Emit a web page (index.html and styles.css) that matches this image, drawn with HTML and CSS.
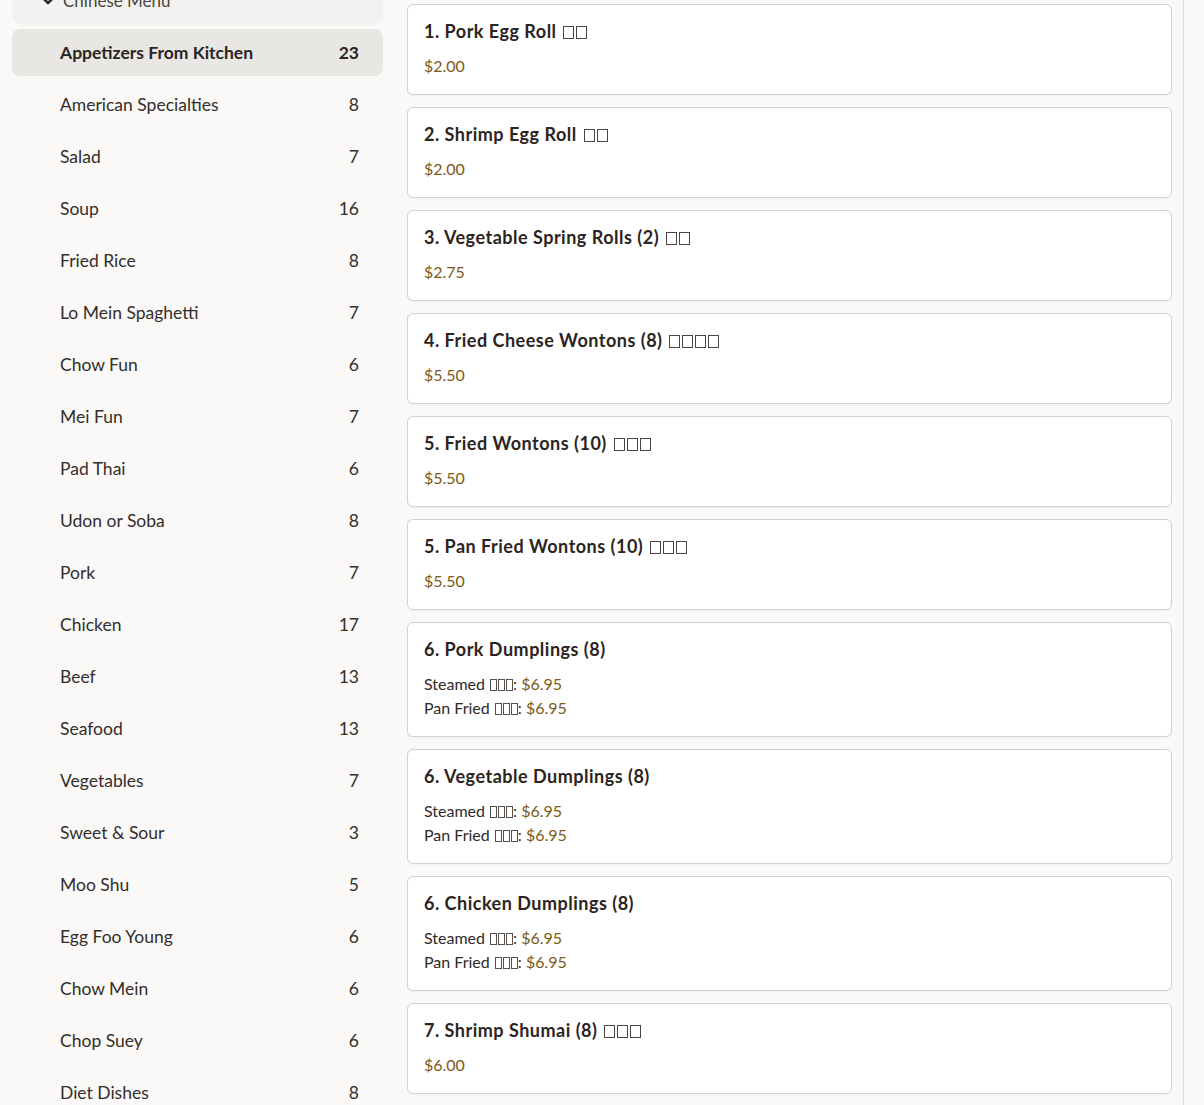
FILE: index.html
```html
<!DOCTYPE html>
<html lang="en">
<head>
<meta charset="utf-8">
<title>Menu</title>
<link rel="stylesheet" href="styles.css">
</head>
<body>
<div class="layout">
  <aside class="sidebar">
    <div class="group-head">
      <svg class="chev" width="14" height="10" viewBox="0 0 14 10"><polyline points="2,2 7,7 12,2" fill="none" stroke="#2b2b2b" stroke-width="2.6" stroke-linecap="round" stroke-linejoin="round"/></svg>
      <span>Chinese Menu</span>
    </div>
    <nav class="cats">
      <a class="cat active"><span>Appetizers From Kitchen</span><span>23</span></a>
      <a class="cat"><span>American Specialties</span><span>8</span></a>
      <a class="cat"><span>Salad</span><span>7</span></a>
      <a class="cat"><span>Soup</span><span>16</span></a>
      <a class="cat"><span>Fried Rice</span><span>8</span></a>
      <a class="cat"><span>Lo Mein Spaghetti</span><span>7</span></a>
      <a class="cat"><span>Chow Fun</span><span>6</span></a>
      <a class="cat"><span>Mei Fun</span><span>7</span></a>
      <a class="cat"><span>Pad Thai</span><span>6</span></a>
      <a class="cat"><span>Udon or Soba</span><span>8</span></a>
      <a class="cat"><span>Pork</span><span>7</span></a>
      <a class="cat"><span>Chicken</span><span>17</span></a>
      <a class="cat"><span>Beef</span><span>13</span></a>
      <a class="cat"><span>Seafood</span><span>13</span></a>
      <a class="cat"><span>Vegetables</span><span>7</span></a>
      <a class="cat"><span>Sweet &amp; Sour</span><span>3</span></a>
      <a class="cat"><span>Moo Shu</span><span>5</span></a>
      <a class="cat"><span>Egg Foo Young</span><span>6</span></a>
      <a class="cat"><span>Chow Mein</span><span>6</span></a>
      <a class="cat"><span>Chop Suey</span><span>6</span></a>
      <a class="cat"><span>Diet Dishes</span><span>8</span></a>
    </nav>
  </aside>
  <main class="content">
    <div class="card">
      <h3 class="title">1. Pork Egg Roll <span class="tf"><i></i><i></i></span></h3>
      <div class="price">$2.00</div>
    </div>
    <div class="card">
      <h3 class="title">2. Shrimp Egg Roll <span class="tf"><i></i><i></i></span></h3>
      <div class="price">$2.00</div>
    </div>
    <div class="card">
      <h3 class="title">3. Vegetable Spring Rolls (2) <span class="tf"><i></i><i></i></span></h3>
      <div class="price">$2.75</div>
    </div>
    <div class="card">
      <h3 class="title">4. Fried Cheese Wontons (8) <span class="tf"><i></i><i></i><i></i><i></i></span></h3>
      <div class="price">$5.50</div>
    </div>
    <div class="card">
      <h3 class="title">5. Fried Wontons (10) <span class="tf"><i></i><i></i><i></i></span></h3>
      <div class="price">$5.50</div>
    </div>
    <div class="card">
      <h3 class="title">5. Pan Fried Wontons (10) <span class="tf"><i></i><i></i><i></i></span></h3>
      <div class="price">$5.50</div>
    </div>
    <div class="card">
      <h3 class="title">6. Pork Dumplings (8)</h3>
      <div class="opts">
        <div class="opt">Steamed <span class="tf sm"><i></i><i></i><i></i></span>: <span class="amt">$6.95</span></div>
        <div class="opt">Pan Fried <span class="tf sm"><i></i><i></i><i></i></span>: <span class="amt">$6.95</span></div>
      </div>
    </div>
    <div class="card">
      <h3 class="title">6. Vegetable Dumplings (8)</h3>
      <div class="opts">
        <div class="opt">Steamed <span class="tf sm"><i></i><i></i><i></i></span>: <span class="amt">$6.95</span></div>
        <div class="opt">Pan Fried <span class="tf sm"><i></i><i></i><i></i></span>: <span class="amt">$6.95</span></div>
      </div>
    </div>
    <div class="card">
      <h3 class="title">6. Chicken Dumplings (8)</h3>
      <div class="opts">
        <div class="opt">Steamed <span class="tf sm"><i></i><i></i><i></i></span>: <span class="amt">$6.95</span></div>
        <div class="opt">Pan Fried <span class="tf sm"><i></i><i></i><i></i></span>: <span class="amt">$6.95</span></div>
      </div>
    </div>
    <div class="card">
      <h3 class="title">7. Shrimp Shumai (8) <span class="tf"><i></i><i></i><i></i></span></h3>
      <div class="price">$6.00</div>
    </div>
  </main>
</div>
</body>
</html>
```

FILE: styles.css
```css
* { box-sizing: border-box; }
html, body { margin: 0; padding: 0; }
body {
  background: #faf9f7;
  font-family: Lato, "Noto Sans", sans-serif;
  color: #2b2623;
  overflow: hidden;
  height: 1105px;
}
.layout {
  display: flex;
  align-items: flex-start;
  gap: 24px;
  padding-left: 12px;
}
.sidebar {
  width: 371px;
  flex: none;
  display: flex;
  flex-direction: column;
  gap: 4px;
  margin-top: -24px;
}
.group-head {
  height: 49px;
  background: #f3f2f0;
  border-radius: 10px;
  display: flex;
  align-items: center;
  padding-left: 29px;
  gap: 8px;
  font-size: 17px;
  color: #4a4542;
}
.chev { display: block; }
.cats {
  display: flex;
  flex-direction: column;
  gap: 5px;
}
.cat {
  height: 47px;
  display: flex;
  align-items: center;
  justify-content: space-between;
  padding: 0 24px 0 48px;
  border-radius: 8px;
  font-size: 17.5px;
  color: #332e2b;
}
.cat.active {
  background: #e8e7e4;
  font-weight: 700;
  color: #2a2522;
}
.content {
  width: 777px;
  flex: none;
  display: flex;
  flex-direction: column;
  gap: 12px;
  padding: 4px 11px 0 0;
  border-right: 1px solid #dcdbd8;
  min-height: 1105px;
}
.card {
  background: #fff;
  border: 1px solid #d3d1ce;
  border-radius: 6px;
  padding: 14px 16px 16px;
  box-shadow: 0 1px 2px rgba(0,0,0,0.04);
}
.title {
  margin: 0;
  font-size: 18px;
  line-height: 25px;
  font-weight: 700;
  letter-spacing: 0.5px;
  color: #2b2421;
}
.price, .opts {
  margin-top: 10px;
  font-size: 16px;
  line-height: 24px;
}
.price, .amt { color: #7c5a17; }
.opt { color: #2f2a27; }
.tf {
  display: inline-flex;
  align-items: flex-end;
  gap: 2px;
  margin-left: 2px;
  vertical-align: -1px;
}
.tf i {
  display: block;
  flex: none;
  width: 11px;
  height: 13px;
  border: 1.5px solid #4a4542;
}
.tf.sm { gap: 1px; margin-left: 1px; }
.tf.sm i {
  width: 7px;
  height: 12px;
  border-width: 1px;
  border-color: #55504c;
}
```
